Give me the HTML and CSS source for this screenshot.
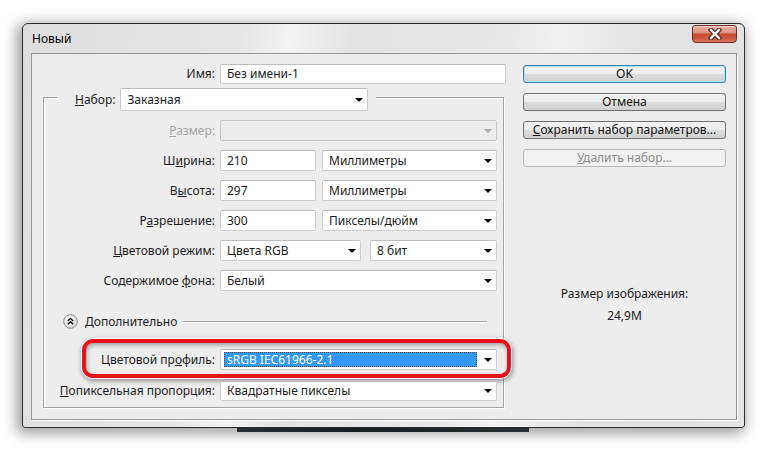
FILE: index.html
```html
<!DOCTYPE html>
<html lang="ru">
<head>
<meta charset="utf-8">
<title>Новый</title>
<link rel="stylesheet" href="styles.css">
</head>
<body>
<div class="desk-strip"></div>
<div class="window">
  <div class="titlebar">
    <span class="title">Новый</span>
    <div class="close">
      <svg width="14" height="12" viewBox="0 0 14 12"><path d="M3 2 L11 10 M11 2 L3 10" stroke="#4a2c28" stroke-width="4.6" stroke-linecap="square"/><path d="M3 2 L11 10 M11 2 L3 10" stroke="#ffffff" stroke-width="2.4" stroke-linecap="square"/></svg>
    </div>
  </div>
  <div class="panel">
    <div class="form">
      <div class="row name-row">
        <span class="lbl w172">Имя:</span>
        <div class="field w286">Без имени-1</div>
      </div>
      <div class="group">
        <div class="legend">
          <span class="lbl-plain"><u>Н</u>абор:</span>
          <div class="field select tall w248">Заказная</div>
        </div>
        <div class="row first">
          <span class="lbl w171 disabled"><u>Р</u>азмер:</span>
          <div class="field select off w277"></div>
        </div>
        <div class="row">
          <span class="lbl w171">Ш<u>и</u>рина:</span>
          <div class="field w96">210</div>
          <div class="field select w175 gap6">Миллиметры</div>
        </div>
        <div class="row">
          <span class="lbl w171">В<u>ы</u>сота:</span>
          <div class="field w96">297</div>
          <div class="field select w175 gap6">Миллиметры</div>
        </div>
        <div class="row">
          <span class="lbl w171">Р<u>а</u>зрешение:</span>
          <div class="field w96">300</div>
          <div class="field select w175 gap6">Пикселы/дюйм</div>
        </div>
        <div class="row">
          <span class="lbl w171"><u>Ц</u>ветовой режим:</span>
          <div class="field select w141">Цвета RGB</div>
          <div class="field select w127 gap9">8 бит</div>
        </div>
        <div class="row">
          <span class="lbl w171">Содержимое <u>ф</u>она:</span>
          <div class="field select w277">Белый</div>
        </div>
        <div class="advanced">
          <svg class="adv-icon" width="15" height="15" viewBox="0 0 15 15">
            <defs><radialGradient id="g" cx="40%" cy="35%" r="70%"><stop offset="0" stop-color="#ffffff"/><stop offset="1" stop-color="#d4d4d4"/></radialGradient></defs>
            <circle cx="7.5" cy="7.5" r="6.8" fill="url(#g)" stroke="#8c8c8c" stroke-width="1"/>
            <path d="M4.8 7 L7.5 4.4 L10.2 7 M4.8 10.3 L7.5 7.7 L10.2 10.3" fill="none" stroke="#111" stroke-width="1.4"/>
          </svg>
          <span class="adv-text">Дополнительно</span>
          <span class="adv-line"></span>
        </div>
        <div class="highlight">
          <span class="lbl w130">Цветовой пр<u>о</u>филь:</span>
          <div class="field select w277"><span class="selected">sRGB IEC61966-2.1</span></div>
        </div>
        <div class="row last">
          <span class="lbl w171"><u>П</u>опиксельная пропорция:</span>
          <div class="field select w277">Квадратные пикселы</div>
        </div>
      </div>
    </div>
    <div class="side">
      <div class="btn default">OK</div>
      <div class="btn">Отмена</div>
      <div class="btn"><u>С</u>охранить набор параметров...</div>
      <div class="btn disabled-btn"><u>У</u>далить набор...</div>
      <div class="info">Размер изображения:</div>
      <div class="info size">24,9M</div>
    </div>
  </div>
</div>
</body>
</html>
```

FILE: styles.css
```css
html, body {
  margin: 0;
  padding: 0;
  background: #ffffff;
}
body {
  width: 768px;
  height: 452px;
  overflow: hidden;
  position: relative;
  font-family: "Noto Sans", "DejaVu Sans", sans-serif;
  font-size: 12px;
  color: #1c1c1c;
}
.desk-strip {
  position: absolute;
  left: 237px;
  top: 420px;
  width: 292px;
  height: 12px;
  background: linear-gradient(90deg, #3a3f42, #23282a 40%, #2f3436 70%, #3b3f41);
}
.window {
  position: relative;
  margin: 23px 0 0 22px;
  width: 723px;
  height: 405px;
  box-sizing: border-box;
  border: 1px solid #2b2b2b;
  border-radius: 6px 6px 3px 3px;
  background: linear-gradient(100deg, #dedede 0%, #e6e6e6 28%, #f3f3f3 34%, #e3e3e3 42%, #e9e9e9 62%, #f1f1f1 68%, #e2e2e2 80%, #e4e4e4 100%);
  box-shadow: -3px 3px 13px 3px rgba(0, 0, 0, 0.36);
  display: flex;
  flex-direction: column;
}
.titlebar {
  height: 29px;
  display: flex;
  align-items: flex-start;
  padding-left: 9px;
  padding-right: 7px;
}
.title {
  margin-top: 6px;
  line-height: 17px;
  color: #000;
}
.close {
  margin-left: auto;
  margin-top: 1px;
  width: 45px;
  height: 18px;
  box-sizing: border-box;
  border: 1px solid #6e2a20;
  border-radius: 3px 3px 4px 4px;
  background: linear-gradient(#eab0a4 0%, #df9584 40%, #c94a33 52%, #cf5b3f 80%, #dc7a5c 100%);
  display: flex;
  align-items: center;
  justify-content: center;
  box-shadow: inset 0 1px 0 rgba(255, 255, 255, 0.5);
}
.panel {
  margin: 0 7px 7px 8px;
  height: 367px;
  box-sizing: border-box;
  border: 1px solid #969696;
  box-shadow: 1px 1px 0 #ffffff;
  background: #ededed;
  display: flex;
  align-items: flex-start;
  padding: 10px 0 0 11px;
}
.form {
  width: 463px;
}
.row {
  display: flex;
  align-items: center;
  height: 21px;
  margin-top: 9px;
}
.name-row {
  margin-top: 0;
  height: 20px;
}
.row.first {
  margin-top: 9px;
}
.lbl {
  text-align: right;
  padding-right: 5px;
  box-sizing: border-box;
  white-space: nowrap;
  line-height: 16px;
}
.w172 { width: 177px; }
.w171 { width: 176px; }
.w130 { width: 134px; }
.lbl-plain {
  padding-right: 5px;
  line-height: 16px;
}
.disabled { color: #a3a3a3; }
.field {
  height: 100%;
  box-sizing: border-box;
  border: 1px solid #cdcdcd;
  border-top-color: #bdbdbd;
  border-radius: 2px;
  background: #ffffff;
  display: flex;
  align-items: center;
  padding-left: 6px;
  line-height: 16px;
  white-space: nowrap;
}
.field.select::after {
  content: "";
  margin-left: auto;
  margin-right: 4px;
  border-left: 4px solid transparent;
  border-right: 4px solid transparent;
  border-top: 4px solid #000;
}
.field.off {
  background: #ebebeb;
  border-color: #c4c4c4;
}
.field.off::after {
  border-top-color: #a8a8a8;
}
.tall { height: 23px; }
.w286 { width: 286px; }
.w248 { width: 248px; }
.w277 { width: 277px; }
.w96 { width: 96px; }
.w175 { width: 175px; }
.w141 { width: 141px; }
.w127 { width: 127px; }
.gap6 { margin-left: 6px; }
.gap9 { margin-left: 9px; }
.group {
  margin-top: 13px;
  width: 461px;
  height: 311px;
  box-sizing: border-box;
  border: 1px solid #a3a3a3;
  box-shadow: 1px 1px 0 #ffffff, inset 1px 1px 0 #ffffff;
}
.legend {
  display: flex;
  align-items: center;
  width: fit-content;
  height: 23px;
  margin: -10px 0 0 13px;
  padding: 0 8px 0 18px;
  background: #ededed;
}
.advanced {
  display: flex;
  align-items: center;
  height: 15px;
  margin-top: 23px;
  padding-left: 19px;
}
.adv-icon {
  display: block;
  flex: none;
}
.adv-text {
  margin-left: 7px;
  line-height: 16px;
}
.adv-line {
  flex: 1;
  height: 1px;
  background: #a8a8a8;
  box-shadow: 0 1px 0 #ffffff;
  margin-left: 6px;
  margin-right: 16px;
}
.highlight {
  margin: 10px 0 0 38px;
  width: 429px;
  height: 39px;
  box-sizing: border-box;
  border: 4px solid #e8111a;
  border-radius: 11px;
  background: #ededed;
  display: flex;
  align-items: flex-start;
  padding-top: 6px;
  box-shadow: 0 0 0 1px rgba(255, 255, 255, 0.95), 1px 2px 5px 1px rgba(0, 0, 0, 0.4), inset 1px 2px 4px rgba(0, 0, 0, 0.35);
}
.highlight .lbl {
  height: 21px;
  display: flex;
  align-items: center;
  justify-content: flex-end;
}
.highlight .field {
  height: 21px;
  padding-left: 3px;
}
.selected {
  display: block;
  width: 253px;
  height: 15px;
  box-sizing: border-box;
  background: #3399ff;
  color: #ffffff;
  border: 1px dotted #6b4a1f;
  padding-left: 2px;
  line-height: 13px;
}
.row.last {
  margin-top: 3px;
  height: 20px;
}
.side {
  margin-left: 17px;
  width: 203px;
  padding-top: 1px;
  display: flex;
  flex-direction: column;
}
.btn {
  height: 18px;
  box-sizing: border-box;
  border: 1px solid #707070;
  border-radius: 3px;
  background: linear-gradient(#f3f3f3 0%, #ececec 48%, #dddddd 52%, #d0d0d0 100%);
  text-align: center;
  line-height: 15px;
  margin-bottom: 10px;
  color: #111;
}
.btn.default {
  border-color: #3c7fb1;
  box-shadow: inset 0 0 0 1px #a8e2f8;
}
.btn.disabled-btn {
  border-color: #b7b7b7;
  background: #f2f2f2;
  color: #8c8c8c;
}
.info {
  text-align: center;
  line-height: 16px;
  margin-top: 109px;
}
.info.size {
  margin-top: 6px;
}
```
